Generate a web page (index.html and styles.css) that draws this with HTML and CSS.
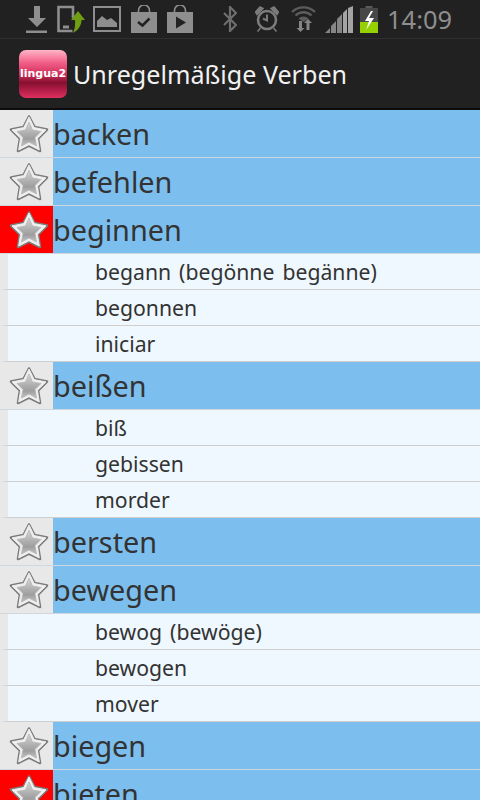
FILE: index.html
```html
<!DOCTYPE html>
<html lang="de">
<head>
    <meta charset="UTF-8">
    <meta name="viewport" content="width=device-width, initial-scale=1.0">
    <title>Unregelmäßige Verben</title>
    <link rel="stylesheet" href="styles.css">
</head>
<body>
    <svg class="defs" width="0" height="0">
        <defs>
            <linearGradient id="starFill" x1="0" y1="0" x2="0" y2="1">
                <stop offset="0" stop-color="#d8d8d8"/>
                <stop offset="0.45" stop-color="#b0b0b0"/>
                <stop offset="0.7" stop-color="#9e9e9e"/>
                <stop offset="1" stop-color="#c2c2c2"/>
            </linearGradient>
            <symbol id="star" viewBox="0 0 40 40">
                <path d="M20 2.500 L25.500 13 L38 15.500 L29 24.500 L31 37 L20 31.500 L9 37 L11 24.500 L2 15.500 L14.500 13 Z" fill="#7c7c7c" stroke="#7c7c7c" stroke-width="2.600" stroke-linejoin="round"/>
                <path d="M20 3 L25.200 13.600 L37 15.900 L28.400 24.300 L30.300 36 L20 30.700 L9.700 36 L11.600 24.300 L3 15.900 L14.800 13.600 Z" fill="#efefef" stroke="#efefef" stroke-width="1" stroke-linejoin="round"/>
                <path d="M20 8 L23.500 16 L32 17.500 L26 23.500 L27.500 32 L20 28 L12.500 32 L14 23.500 L8 17.500 L16.500 16 Z" fill="url(#starFill)" stroke="#b4b4b4" stroke-width="0.800" stroke-linejoin="round"/>
            </symbol>
        </defs>
    </svg>

    <header>
        <div class="status-bar">
            <div class="status-left">
                <svg class="ic" width="23" height="30" viewBox="0 0 23 30"><path d="M8 2h6v12h6l-9 9-9-9h6z" fill="#8e8e8e"/><rect x="0" y="26.500" width="21" height="2.500" fill="#8e8e8e"/></svg>
                <svg class="ic" width="30" height="30" viewBox="0 0 30 30"><path d="M17 14V3H2.500v24h14" fill="none" stroke="#8e8e8e" stroke-width="2.600"/><rect x="7" y="21.500" width="6" height="3" fill="#8e8e8e"/><path d="M22 7l7 9h-3.500c0 5-3 10-8.500 13 1.800-4 2.500-8.500 2-13h-4z" fill="#6f9e12"/></svg>
                <svg class="ic" width="28" height="26" viewBox="0 0 28 26"><rect x="1" y="1" width="26" height="24" fill="none" stroke="#8e8e8e" stroke-width="2"/><path d="M4 21v-6l5-5 5 4 4-2 6 5v4z" fill="#8e8e8e"/></svg>
                <svg class="ic ic-bag" width="26" height="28" viewBox="0 0 26 28"><path d="M7.500 7V5.500a5.500 5.500 0 0 1 11 0V7" fill="none" stroke="#8e8e8e" stroke-width="1.600"/><rect y="7" width="26" height="21" fill="#8e8e8e"/><path d="M7 17l4.500 3.500 7-7" fill="none" stroke="#222" stroke-width="2.600"/></svg>
                <svg class="ic ic-bag" width="26" height="28" viewBox="0 0 26 28"><path d="M7.500 7V5.500a5.500 5.500 0 0 1 11 0V7" fill="none" stroke="#8e8e8e" stroke-width="1.600"/><rect y="7" width="26" height="21" fill="#8e8e8e"/><path d="M9 11.500l10 6-10 6z" fill="#222"/></svg>
            </div>
            <div class="status-right">
                <svg class="ic" width="14" height="26" viewBox="0 0 14 26"><path d="M1 7l12 12-6 6V1l6 6L1 19" fill="none" stroke="#6e6e6e" stroke-width="2.200"/></svg>
                <svg class="ic ic-alarm" width="24" height="26" viewBox="0 0 24 26"><circle cx="12" cy="14" r="9" fill="none" stroke="#7c7c7c" stroke-width="2.600"/><path d="M12 8.500v6l-4-2" fill="none" stroke="#7c7c7c" stroke-width="2"/><path d="M0.500 6l4.500-5 3 1.500-6 6zM23.500 6l-4.500-5-3 1.500 6 6zM5.500 22l-3 3.500M18.500 22l3 3.500" fill="#7c7c7c" stroke="#7c7c7c" stroke-width="1.500"/></svg>
                <svg class="ic ic-wifi" width="25" height="26" viewBox="0 0 25 26"><path d="M1 6a16.500 16.500 0 0 1 23 0M4.500 9.500a11.500 11.500 0 0 1 16 0" fill="none" stroke="#5c5c5c" stroke-width="2.400"/><path d="M7.500 12.500a7 7 0 0 1 10 0L12.500 16z" fill="#5c5c5c"/><path d="M8 15h3v7h2.500l-4 4-4-4H8zM17 13l4 4h-2.500v7h-3v-7H13z" fill="#858585"/></svg>
                <svg class="ic ic-signal" width="28" height="27" viewBox="0 0 28 27"><path d="M0 27l5-5v5zM6 27v-7l5-5v12zM12 27V13l5-5v19z" fill="#858585"/><path d="M18 27V7l4-4v24zM23 27V2l5-2v27z" fill="#a4a4a4"/></svg>
                <svg class="ic ic-batt" width="18" height="27" viewBox="0 0 18 27"><rect x="5.500" y="0" width="7" height="3" fill="#5a5a5a"/><rect y="2" width="18" height="15" fill="#474747"/><rect y="16" width="18" height="11" fill="#95d000"/><path d="M11 5l-6 10h4l-3 9 8-12H9l4-7z" fill="#fff"/></svg>
                <span class="clock">14:09</span>
            </div>
        </div>
        <div class="action-bar">
            <div class="logo"><span>lingua2</span></div>
            <h1>Unregelmäßige Verben</h1>
        </div>
    </header>

    <div class="verb-list">
        <div class="verb"><div class="fav"><svg class="star"><use href="#star"/></svg></div><div class="word">backen</div></div>
        <div class="verb"><div class="fav"><svg class="star"><use href="#star"/></svg></div><div class="word">befehlen</div></div>
        <div class="verb"><div class="fav on"><svg class="star"><use href="#star"/></svg></div><div class="word">beginnen</div></div>
        <div class="form"><div class="form-text">begann (begönne begänne)</div></div>
        <div class="form"><div class="form-text">begonnen</div></div>
        <div class="form"><div class="form-text">iniciar</div></div>
        <div class="verb"><div class="fav"><svg class="star"><use href="#star"/></svg></div><div class="word">beißen</div></div>
        <div class="form"><div class="form-text">biß</div></div>
        <div class="form"><div class="form-text">gebissen</div></div>
        <div class="form"><div class="form-text">morder</div></div>
        <div class="verb"><div class="fav"><svg class="star"><use href="#star"/></svg></div><div class="word">bersten</div></div>
        <div class="verb"><div class="fav"><svg class="star"><use href="#star"/></svg></div><div class="word">bewegen</div></div>
        <div class="form"><div class="form-text">bewog (bewöge)</div></div>
        <div class="form"><div class="form-text">bewogen</div></div>
        <div class="form"><div class="form-text">mover</div></div>
        <div class="verb"><div class="fav"><svg class="star"><use href="#star"/></svg></div><div class="word">biegen</div></div>
        <div class="verb"><div class="fav on"><svg class="star"><use href="#star"/></svg></div><div class="word">bieten</div></div>
    </div>
</body>
</html>
```
FILE: styles.css
```css
html, body {
    margin: 0;
    height: 800px;
    overflow: hidden;
}

body {
    font-family: "Noto Sans", "Open Sans", sans-serif;
    background: #f0f8ff;
    color: #333;
}

.defs {
    display: block;
    height: 0;
}

.ic {
    display: block;
    flex: none;
}

/* top bars */
header {
    background: #212121;
    height: 110px;
    box-sizing: border-box;
    border-bottom: 2px solid #0c0c0c;
}

.status-bar {
    height: 38px;
    display: flex;
    justify-content: space-between;
    align-items: center;
    border-bottom: 1px solid #2f2f2f;
}

.status-left {
    display: flex;
    align-items: center;
    gap: 7px;
    padding-left: 26px;
}

.ic-bag {
    margin-left: 3px;
}

.status-right {
    display: flex;
    align-items: center;
    padding-right: 28px;
}

.ic-alarm {
    margin-left: 18px;
}

.ic-wifi {
    margin-left: 12px;
}

.ic-signal {
    margin-left: 9px;
}

.ic-batt {
    margin-left: 7px;
}

.clock {
    font-size: 25.400px;
    color: #8e8e8e;
    margin-left: 9px;
}

.action-bar {
    height: 69px;
    display: flex;
    align-items: center;
    padding-left: 19px;
    gap: 6px;
}

.logo {
    width: 48px;
    height: 48px;
    border-radius: 7px;
    background: linear-gradient(to bottom, #ffb6c8 0%, #f2628a 25%, #d2305c 50%, #861030 68%, #a81a42 80%, #e0305f 100%);
    display: flex;
    align-items: center;
    justify-content: center;
}

.logo span {
    font-family: "DejaVu Sans", sans-serif;
    font-weight: bold;
    font-size: 11px;
    color: #fff;
}

h1 {
    margin: 0;
    font-size: 25.100px;
    font-weight: normal;
    color: #f2f2f2;
}

/* list */
.verb {
    height: 48px;
    box-sizing: border-box;
    display: flex;
    background: #7cbfee;
    border-bottom: 1px solid #cfd8de;
}

.fav {
    width: 53px;
    flex: none;
    background: #e8e8e8;
    display: flex;
    align-items: center;
    justify-content: center;
    padding-left: 4px;
    box-sizing: border-box;
}

.fav.on {
    background: #ff0000;
}

.star {
    width: 40px;
    height: 40px;
}

.word {
    font-size: 28.800px;
    line-height: 47px;
    color: #333;
}

.form {
    height: 36px;
    box-sizing: border-box;
    background: #f0f8ff;
    border-left: 8px solid #e8e8e8;
    border-bottom: 1px solid #cfcfcf;
}

.form-text {
    font-size: 21.200px;
    word-spacing: 2.500px;
    line-height: 35px;
    padding-left: 87px;
    color: #333;
}
```
